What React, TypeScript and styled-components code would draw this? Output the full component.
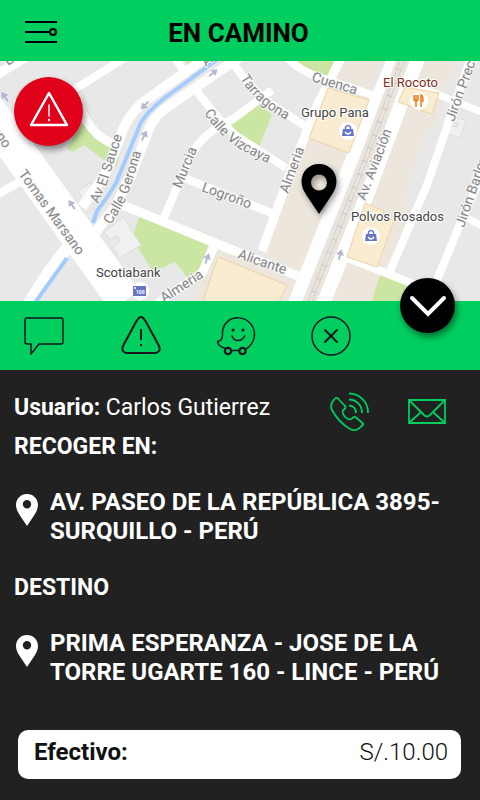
import React from "react";
import styled, { createGlobalStyle } from "styled-components";

const GREEN = "#00ce5f";
const DARK = "#212121";

const GlobalStyle = createGlobalStyle`
  *, *::before, *::after { box-sizing: border-box; }
  body { margin: 0; background: ${DARK}; font-family: Roboto, "Open Sans", sans-serif; }
  button { font: inherit; }
`;

const Screen = styled.main`
  display: flex;
  flex-direction: column;
  min-height: 100vh;
  background: ${DARK};
  color: #fff;
`;

const Header = styled.header`
  display: grid;
  grid-template-columns: 60px 1fr 60px;
  align-items: center;
  height: 61px;
  padding: 4px 3px 0 0;
  background: ${GREEN};
  color: #000;
`;

const Title = styled.h1`
  margin: 0;
  font-size: 26px;
  line-height: 32px;
  font-weight: 700;
  text-align: center;
`;

const IconButton = styled.button<{ $color?: string }>`
  display: flex;
  align-items: center;
  justify-content: center;
  padding: 0;
  border: 0;
  background: none;
  color: ${(p) => p.$color ?? "#1c1420"};
  cursor: pointer;
  svg { display: block; fill: none; stroke: currentColor; }
`;

const MenuButton = styled(IconButton)`
  padding: 0 0 2px 22px;
`;

const MapArea = styled.section`
  position: relative;
  height: 240px;
  background: #e8e8e8;
`;

const MapDrawing = styled.svg`
  display: block;
  width: 100%;
  height: 100%;
`;

const RoundButton = styled(IconButton)<{ $size: number; $bg: string }>`
  position: absolute;
  width: ${(p) => p.$size}px;
  height: ${(p) => p.$size}px;
  border-radius: 50%;
  background: ${(p) => p.$bg};
  color: #fff;
  box-shadow: 2px 4px 6px rgba(0, 0, 0, 0.45);
`;

const AlertButton = styled(RoundButton)`
  top: 16px;
  left: 14px;
  padding-bottom: 6px;
`;

const CollapseButton = styled(RoundButton)`
  right: 25px;
  bottom: -32px;
  z-index: 1;
`;

const Actions = styled.nav`
  display: grid;
  grid-template-columns: repeat(5, 1fr);
  height: 69px;
  padding-right: 7px;
  background: ${GREEN};
`;

const Details = styled.section`
  display: flex;
  flex: 1;
  flex-direction: column;
  padding: 17px 19px 21px 14px;
  font-size: 24px;
  line-height: 29px;
`;

const UserRow = styled.div`
  display: flex;
  align-items: center;
  justify-content: space-between;
  height: 40px;
`;

const UserName = styled.p`
  margin: 0;
  font-size: 23px;
  white-space: nowrap;
`;

const Strong = styled.strong`
  font-weight: 700;
`;

const Contact = styled.div`
  display: flex;
  gap: 37px;
  padding: 10px 15px 0 0;
`;

const Label = styled.h2`
  margin: 0;
  padding-top: 5px;
  font-size: 23px;
  line-height: 29px;
  font-weight: 700;
`;

const Address = styled.address`
  display: grid;
  grid-template-columns: 25px 1fr;
  column-gap: 11px;
  margin: 27px 0 22px;
  font-style: normal;
  font-weight: 700;
  svg { display: block; margin: 6px 0 0 2px; }
`;

const Fare = styled.dl`
  display: flex;
  align-items: center;
  justify-content: space-between;
  height: 49px;
  margin: auto 0 0 4px;
  padding: 0 13px 4px 16px;
  border-radius: 10px;
  background: #fff;
  color: #111;
  dt { font-weight: 700; }
  dd { margin: 0; font-weight: 300; }
`;

function PinIcon() {
  return (
    <svg width="22" height="32" viewBox="0 0 22 32" aria-hidden="true">
      <path fill="#fff" fillRule="evenodd" d="M11 0C4.800 0 0 4.800 0 11c0 3 1.200 6 3 9l8 12 8-12c1.800-3 3-6 3-9C22 4.800 17.200 0 11 0Zm0 6a4.200 4.200 0 1 1 0 8.400A4.200 4.200 0 0 1 11 6Z" />
    </svg>
  );
}

type StreetProps = { d: string; w: number };
const Street = ({ d, w }: StreetProps) => (
  <path d={d} fill="none" stroke="#fff" strokeWidth={w} strokeLinejoin="round" />
);

const streets: StreetProps[] = [
  { d: "M-4 75 32 54", w: 9 },
  { d: "M-30 85 125 301", w: 35 },
  { d: "M-5 196 30 176", w: 8 },
  { d: "M68 247Q47 272 28 305", w: 12 },
  { d: "M72 91 134 52", w: 8 },
  { d: "M76 94Q86 135 116 145", w: 9 },
  { d: "M208 56 142 103Q126 117 119 140T98 185L82 207", w: 10 },
  { d: "M244 54 166 108Q152 118 147 134L131 175 115 207 94 234", w: 10 },
  { d: "M174 56 185 73", w: 8 },
  { d: "M195 89 214 113 235 135 286 168", w: 8 },
  { d: "M272 90 233 119Q198 135 188 162L163 220", w: 8 },
  { d: "M182 177 231 197 274 214", w: 8 },
  { d: "M120 204 215 243 298 276", w: 9 },
  { d: "M215 244 202 273 158 303", w: 9 },
  { d: "M228 54Q245 85 271 104L305 126", w: 8 },
  { d: "M284 54Q296 69 318 77L378 97", w: 8 },
  { d: "M343 54 318 104 292 168 262 251", w: 9 },
  { d: "M402 80 484 113", w: 7 },
  { d: "M471 57 450 118 427 185 390 271", w: 8 },
  { d: "M489 160 463 217 437 280", w: 8 },
  { d: "M463 216 484 227", w: 7 },
  { d: "M340 255 416 285", w: 8 },
];

const buildings = [
  "M328 88 369 100 349 153 309 138Z",
  "M405 87 439 93 432 114 398 102Z",
  "M365 203 384 211 383 217 394 220 377 267 347 257Z",
  "M218 257 287 285 278 304 202 304Z",
];

const labelPaint = {
  fontSize: 14,
  fill: "#858585",
  stroke: "#f7f7f7",
  strokeWidth: 2,
  strokeLinejoin: "round",
  paintOrder: "stroke",
} as const;

type NameProps = { x: number; y: number; r: number; children: string };
const StreetName = ({ x, y, r, children }: NameProps) => (
  <text transform={`translate(${x} ${y}) rotate(${r})`} {...labelPaint}>{children}</text>
);

type CurvedNameProps = { id: string; d: string; children: string };
const CurvedName = ({ id, d, children }: CurvedNameProps) => (
  <>
    <path id={id} d={d} fill="none" />
    <text {...labelPaint}><textPath href={`#${id}`}>{children}</textPath></text>
  </>
);

const Arrow = ({ x, y, r }: { x: number; y: number; r: number }) => (
  <path transform={`translate(${x} ${y}) rotate(${r})`} d="M0-6 4 0H1V5H-1V0H-4Z" fill="#b4b9d2" />
);

const Place = ({ x, y, color, children }: { x: number; y: number; color: string; children: string }) => (
  <text x={x} y={y} fontSize="13" fill={color} stroke="#fff" strokeWidth="2" strokeLinejoin="round" paintOrder="stroke">
    {children}
  </text>
);

const Shop = ({ x, y }: { x: number; y: number }) => (
  <g transform={`translate(${x} ${y})`}>
    <circle r="9" fill="#fff" />
    <path d="M-5-2H5L6 5H-6Z" fill="#6675c4" />
    <path d="M-2.500-2V-4Q0-7 2.500-4V-2" fill="none" stroke="#6675c4" strokeWidth="1.500" />
    <path d="M-3 1Q0 5 3 1" fill="none" stroke="#fff" strokeWidth="1.400" />
  </g>
);

function CityMap() {
  return (
    <MapDrawing viewBox="0 61 480 240" preserveAspectRatio="xMidYMid slice" role="img" aria-label="Mapa">
      <rect x="-400" y="0" width="1300" height="400" fill="#e8e8e8" />
      <g fill="#ece6dc">
        <path d="M345 56H384L300 276 262 262 318 104Z" />
        <path d="M420 56H458L445 88 436 126 426 130 404 198 410 214 384 272 372 304H325Z" />
        <path d="M212 248 300 280 290 304H190Z" />
      </g>
      <g fill="#cbe6a3">
        <path d="M67 149 83 121 96 140 122 148 116 167 100 157 84 145 73 152Z" />
        <path d="M186 58H208L190 76Z" />
        <path d="M224 126 257 102 272 115 257 152 232 139Z" />
        <path d="M292 58H340L333 80 308 71Z" />
        <path d="M140 215 209 243 197 277 187 277 175 262 153 272 132 238Z" />
        <path d="M380 275 410 285 404 304H371Z" />
      </g>
      <g fill="#f0f0f0" stroke="#dcdcdc">
        <path d="M78 191 91 182 94 196 84 201ZM104 232 123 217 141 245 120 258 113 248 121 240 116 235 110 240Z" />
        <path d="M451 117 466 120 460 138 448 134 451 126 457 127 458 123 450 122Z" />
      </g>
      {streets.map((s) => <Street key={s.d} {...s} />)}
      <g fill="none" strokeLinecap="butt">
        <path d="M395 56 350 164 294 304" stroke="#fff" strokeWidth="13" />
        <path d="M419 56 369 190 323 304" stroke="#fff" strokeWidth="14" />
        <path d="M404 56 357 182 309 304" stroke="#ebe4da" strokeWidth="12" />
        <path d="M402 56 355 182 307 304M406 56 359 182 311 304" stroke="#cfd1d5" />
        <path d="M404 56 357 182 309 304" stroke="#c2c7d2" strokeWidth="6" strokeDasharray="1 13" />
        <path d="M222 56 166 97Q143 115 139 127L116 183Q108 197 97 211L93 223M67 258 34 304" stroke="#a2cbff" strokeWidth="4" />
      </g>
      <g fill="#f9ecd0" stroke="#ebd5a7">
        {buildings.map((d) => <path key={d} d={d} />)}
      </g>
      <Arrow x={5} y={97} r={-35} />
      <Arrow x={72} y={205} r={-35} />
      <Arrow x={145} y={105} r={225} />
      <Arrow x={213} y={73} r={50} />
      <Arrow x={144} y={136} r={25} />
      <Arrow x={207} y={259} r={20} />
      <Arrow x={340} y={255} r={15} />

      <StreetName x={8} y={66} r={-36}>La</StreetName>
      <StreetName x={206} y={67} r={-40}>Av</StreetName>
      <StreetName x={-9} y={130} r={55}>ano</StreetName>
      <StreetName x={18} y={174} r={54}>Tomas Marsano</StreetName>
      <CurvedName id="sauce" d="M98 204 107 184 124 130">Av El Sauce</CurvedName>
      <CurvedName id="gerona" d="M111 225 124 203Q130 192 144 142">Calle Gerona</CurvedName>
      <CurvedName id="vizcaya" d="M204 113Q220 137 240 149L275 167">Calle Vizcaya</CurvedName>
      <StreetName x={181} y={189} r={-68}>Murcia</StreetName>
      <StreetName x={201} y={191} r={20}>Logroño</StreetName>
      <CurvedName id="tarragona" d="M240 78Q256 106 296 125">Tarragona</CurvedName>
      <StreetName x={311} y={81} r={17}>Cuenca</StreetName>
      <StreetName x={288} y={194} r={-70}>Almeria</StreetName>
      <StreetName x={237} y={258} r={19}>Alicante</StreetName>
      <StreetName x={164} y={303} r={-33}>Almeria</StreetName>
      <StreetName x={365} y={201} r={-69}>Av. Aviación</StreetName>
      <StreetName x={454} y={122} r={-70}>Jirón Precursores</StreetName>
      <StreetName x={464} y={228} r={-71}>Jirón Barlovento</StreetName>

      <circle cx="419" cy="101" r="9" fill="#fff" />
      <path d="M414 95V99Q414 101 416 101T418 99V95M416 95V107M421 107V95Q423 96 423 101H421" fill="none" stroke="#ed7d16" strokeWidth="1.500" />
      <Shop x={348} y={131} />
      <Shop x={371} y={236} />
      <circle cx="140" cy="291" r="9" fill="#fff" />
      <rect x="133" y="286" width="13" height="10" fill="#6675c4" />
      <circle cx="135" cy="288" r="1" fill="#fff" />
      <text x="136" y="294" fontSize="5" fontWeight="700" fill="#fff">100</text>

      <Place x={301} y={117} color="#444">Grupo Pana</Place>
      <Place x={383} y={87} color="#842f1c">El Rocoto</Place>
      <Place x={351} y={221} color="#444">Polvos Rosados</Place>
      <Place x={96} y={277} color="#444">Scotiabank</Place>

      <path
        filter="url(#pinShadow)"
        fill="#000"
        fillRule="evenodd"
        d="M319 164c-10 0-17.500 7.500-17.500 17.500 0 5 2 9 4.500 13l13 19.500 13-19.500c2.500-4 4.500-8 4.500-13 0-10-7.500-17.500-17.500-17.500Zm0 10.500a8 8 0 1 1 0 16 8 8 0 0 1 0-16Z"
      />
      <defs>
        <filter id="pinShadow" x="-50%" y="-50%" width="200%" height="200%">
          <feDropShadow dx="2" dy="3" stdDeviation="3" floodOpacity="0.4" />
        </filter>
      </defs>
    </MapDrawing>
  );
}

export default function App() {
  return (
    <Screen>
      <GlobalStyle />
      <Header>
        <MenuButton aria-label="Menú" $color="#000">
          <svg width="32" height="24" viewBox="0 0 32 24" strokeWidth="2">
            <path d="M0 2H32M0 12H25M0 22H32" />
            <circle cx="28" cy="12" r="3" />
          </svg>
        </MenuButton>
        <Title>EN CAMINO</Title>
      </Header>

      <MapArea>
        <CityMap />
        <AlertButton $size={69} $bg="#e1001a" aria-label="Emergencia">
          <svg width="40" height="36" viewBox="0 0 40 36" strokeWidth="2.500" strokeLinejoin="round">
            <path d="M20 2 38 34H2Z" />
            <path d="M20 14V25" strokeWidth="1.500" strokeLinecap="round" />
            <circle cx="20" cy="29" r="1.200" fill="currentColor" stroke="none" />
          </svg>
        </AlertButton>
        <CollapseButton $size={55} $bg="#000" aria-label="Ocultar detalles">
          <svg width="38" height="22" viewBox="0 0 38 22" strokeWidth="4" strokeLinecap="round">
            <path d="M3 3 19 19 35 3" />
          </svg>
        </CollapseButton>
      </MapArea>

      <Actions aria-label="Acciones del viaje">
        <IconButton aria-label="Mensaje">
          <svg width="46" height="40" viewBox="0 0 46 40" strokeWidth="1.500" strokeLinejoin="round">
            <path d="M6 2H37Q39 2 39 4V26Q39 28 37 28H15L7 38V28H3Q1 28 1 26V4Q1 2 3 2Z" />
          </svg>
        </IconButton>
        <IconButton aria-label="Alerta">
          <svg width="42" height="40" viewBox="0 0 42 40" strokeWidth="2" strokeLinejoin="round">
            <path d="M15.500 5Q18 1 20 1T24.500 5L37.500 29Q39.500 33 38 35T34 37H6Q3.500 37 2 35T2.500 29Z" />
            <path d="M20 13V24M20 28V30" />
          </svg>
        </IconButton>
        <IconButton aria-label="Waze">
          <svg width="40" height="40" viewBox="0 0 40 40" strokeWidth="1.500" strokeLinecap="round" strokeLinejoin="round">
            <path d="M8.500 32Q2 30 1.500 25.500Q6.500 25 6.500 19V16C8-3 36-3 38.500 17C39 24 35 30 30 33M15.500 34.500H23" />
            <circle cx="12" cy="35" r="3.200" strokeWidth="2.200" />
            <circle cx="26.500" cy="35" r="3.200" strokeWidth="2.200" />
            <circle cx="17" cy="14" r="1.500" fill="currentColor" stroke="none" />
            <circle cx="27" cy="14" r="1.500" fill="currentColor" stroke="none" />
            <path d="M16 20C18 26 26 26 28.500 20" />
          </svg>
        </IconButton>
        <IconButton aria-label="Cancelar">
          <svg width="40" height="40" viewBox="0 0 40 40" strokeWidth="1.500">
            <circle cx="20" cy="20" r="19" />
            <path d="M14 14 26 26M26 14 14 26" strokeWidth="2" strokeLinecap="round" />
          </svg>
        </IconButton>
      </Actions>

      <Details>
        <UserRow>
          <UserName><Strong>Usuario:</Strong> Carlos Gutierrez</UserName>
          <Contact>
            <IconButton $color={GREEN} aria-label="Llamar">
              <svg width="42" height="40" viewBox="0 0 42 40" strokeWidth="1.800" strokeLinejoin="round">
                <path d="M9 6.500Q7 5 5.500 7C2 11 1 14 3 18C8 27 14 33 21 37Q27 40 31.500 35Q35.500 32.500 33.500 31L27 25.500Q25 24 23.500 26T19 27Q14 24 13.500 20Q13.500 18.500 15.500 17T15.500 13.500Z" />
                <path d="M20 1.500A19 19 0 0 1 39 21M20 7.500A13 13 0 0 1 33 21M20 13.500A7 7 0 0 1 27 21" />
              </svg>
            </IconButton>
            <IconButton $color={GREEN} aria-label="Enviar correo">
              <svg width="38" height="26" viewBox="0 0 38 26" strokeWidth="1.800">
                <path d="M1 1H37V24H1ZM1 1 16 16Q19 19 22 16L37 1M1 24 13 13M37 24 25 13" />
              </svg>
            </IconButton>
          </Contact>
        </UserRow>
        <Label>RECOGER EN:</Label>
        <Address>
          <PinIcon />
          <span>AV. PASEO DE LA REPÚBLICA 3895-<br />SURQUILLO - PERÚ</span>
        </Address>
        <Label>DESTINO</Label>
        <Address>
          <PinIcon />
          <span>PRIMA ESPERANZA - JOSE DE LA<br />TORRE UGARTE 160 - LINCE - PERÚ</span>
        </Address>
        <Fare>
          <dt>Efectivo:</dt>
          <dd>S/.10.00</dd>
        </Fare>
      </Details>
    </Screen>
  );
}
